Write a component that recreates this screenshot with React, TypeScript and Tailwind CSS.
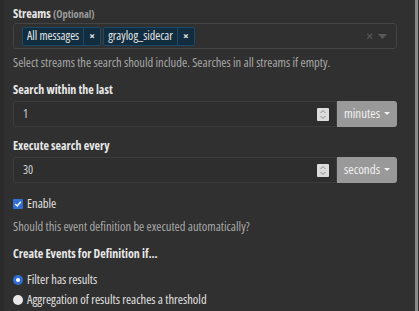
import React from "react";

function Spinner() {
  return (
    <div className="w-[12px] h-[13px] bg-[#dcdcdc] rounded-[1px] flex flex-col items-center justify-center">
      <svg width="8" height="11" viewBox="0 0 8 11" fill="none" stroke="#8a8a8a" strokeWidth="1">
        <path d="M1.5 4 L4 1.5 L6.5 4" />
        <path d="M1.5 7 L4 9.5 L6.5 7" />
      </svg>
    </div>
  );
}

function NumberRow({ value, unit }: { value: string; unit: string }) {
  return (
    <div className="flex h-[26px] w-[384px]">
      <div className="flex-1 flex items-center justify-between border border-[#3d3d3d] rounded-l-[3px] bg-[#2e2e2e] pl-[9px] pr-[7px]">
        <span className="text-[#d0d0d0] text-[12px]">{value}</span>
        <Spinner />
      </div>
      <div className="w-[60px] bg-[#999999] rounded-r-[3px] flex items-center justify-center gap-[4px] text-[#f0f0f0] text-[13px]">
        <span>{unit}</span>
        <svg width="6" height="4" viewBox="0 0 6 4"><path d="M0 0 L6 0 L3 3 Z" fill="#f0f0f0" /></svg>
      </div>
    </div>
  );
}

function Tag({ label }: { label: string }) {
  return (
    <div className="flex h-[19px] border border-[#1c4a66] bg-[#112d3f] rounded-[2px] text-[#e6e6e6] text-[12px]">
      <span className="px-[4px] flex items-center">{label}</span>
      <span className="w-[17px] border-l border-[#1c4a66] flex items-center justify-center font-bold text-[11px]">×</span>
    </div>
  );
}

export default function App() {
  return (
    <div
      className="w-[419px] h-[311px] bg-[#303030] flex overflow-hidden font-stretch-condensed"
      style={{ fontFamily: '"Open Sans", "Liberation Sans", sans-serif' }}
    >
      <div className="w-[4px] bg-[#2a2a2a]" />
      <div className="flex-1 pl-[9px] pt-[6px] flex flex-col">
        <div className="text-[12px] font-bold text-[#e8e8e8] leading-[15px]">
          Streams <span className="text-[10.5px] text-[#9a9a9a]">(Optional)</span>
        </div>
        <div className="mt-[1px] w-[384px] h-[26px] border border-[#444] rounded-[3px] flex items-center pl-[8px] pr-[9px]">
          <div className="flex gap-[2px] flex-1">
            <Tag label="All messages" />
            <Tag label="graylog_sidecar" />
          </div>
          <span className="text-[#5a5a5a] text-[16px] leading-none mr-[5px]">×</span>
          <svg width="9" height="5" viewBox="0 0 9 5"><path d="M0 0 L9 0 L4.5 5 Z" fill="#5a5a5a" /></svg>
        </div>
        <div className="mt-[6px] text-[12.5px] text-[#a8a8a8] leading-[15px]">
          Select streams the search should include. Searches in all streams if empty.
        </div>
        <div className="mt-[12px] text-[12px] font-bold text-[#e8e8e8] leading-[15px]">Search within the last</div>
        <div className="mt-[4px]">
          <NumberRow value="1" unit="minutes" />
        </div>
        <div className="mt-[11px] text-[12px] font-bold text-[#e8e8e8] leading-[15px]">Execute search every</div>
        <div className="mt-[4px]">
          <NumberRow value="30" unit="seconds" />
        </div>
        <div className="mt-[13px] flex items-center gap-[4px] text-[12.5px] text-[#e0e0e0] leading-[15px]">
          <div className="w-[10px] h-[10px] bg-[#2f6fd6] rounded-[1px] flex items-center justify-center">
            <svg width="8" height="8" viewBox="0 0 8 8"><path d="M1.2 4 L3.2 6 L6.8 1.8" stroke="white" strokeWidth="1.4" fill="none" /></svg>
          </div>
          <span>Enable</span>
        </div>
        <div className="mt-[8px] text-[12.5px] text-[#a8a8a8] leading-[15px]">Should this event definition be executed automatically?</div>
        <div className="mt-[12px] text-[12px] font-bold text-[#e8e8e8] leading-[15px]">Create Events for Definition if...</div>
        <div className="mt-[11px] flex items-center gap-[4px] text-[12.5px] text-[#e0e0e0] leading-[15px]">
          <div className="w-[10px] h-[10px] rounded-full bg-[#2f6fd6] flex items-center justify-center">
            <div className="w-[4px] h-[4px] rounded-full bg-white" />
          </div>
          <span>Filter has results</span>
        </div>
        <div className="mt-[5px] flex items-center gap-[4px] text-[12.5px] text-[#e0e0e0] leading-[15px]">
          <div className="w-[10px] h-[10px] rounded-full bg-[#e8e8e8]" />
          <span>Aggregation of results reaches a threshold</span>
        </div>
      </div>
      <div className="w-[3px] bg-[#8a8a8a] mr-[1px]" />
    </div>
  );
}
